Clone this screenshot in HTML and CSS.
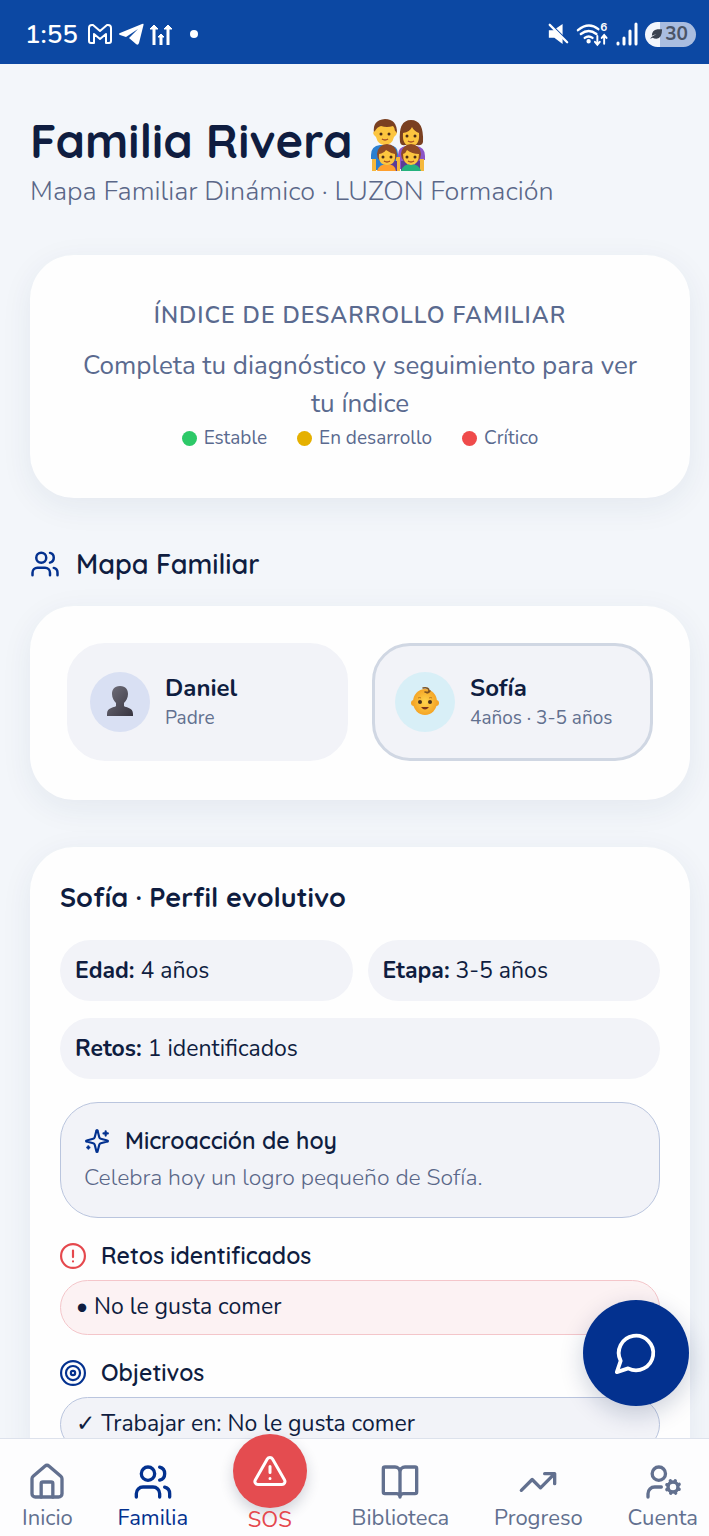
FILE: index.html
```html
<!DOCTYPE html>
<html lang="es">
  <head>
    <meta charset="utf-8">
    <meta name="viewport" content="width=device-width, initial-scale=1">
    <title>Familia Rivera</title>
    <link rel="stylesheet" href="styles.css">
  </head>
  <body>
    <!-- shared icons -->
    <svg class="sprite" aria-hidden="true">
      <symbol id="users" viewBox="0 0 24 24">
        <path d="M16 21v-2a4 4 0 0 0-4-4H6a4 4 0 0 0-4 4v2"/>
        <circle cx="9" cy="7" r="4"/>
        <path d="M22 21v-2a4 4 0 0 0-3-3.87M16 3.13a4 4 0 0 1 0 7.75"/>
      </symbol>
    </svg>

    <div class="app">
      <div class="status">
        <div class="status__group">
          <span class="status__time">1:55</span>
          <svg width="26" height="24" viewBox="0 0 26 24" fill="none" stroke="#fff" stroke-width="2" stroke-linejoin="round">
            <path d="M2 6q0-3 3-3h1l7 6 7-6h1q3 0 3 3v13q0 2-2 2h-3v-9l-6 5-6-5v9H4q-2 0-2-2z"/>
          </svg>
          <svg width="26" height="24" viewBox="0 0 26 24" fill="#fff">
            <path d="M2 11 24 2q2-1 1.500 1L21 21q-1 3-3 1l-7-6 9-9L8 15l-6-2q-2-1 0-2z"/>
          </svg>
          <svg width="24" height="24" viewBox="0 0 24 24" fill="none" stroke="#fff" stroke-width="3">
            <path d="M5 23V4M19 23V4M12 23V13"/>
            <path d="M1 7l4-4 4 4zM15 7l4-4 4 4zM9 15l3-3 3 3z" stroke-width="1" fill="#fff"/>
          </svg>
          <span class="status__dot"></span>
        </div>
        <div class="status__group status__group--right">
          <svg width="22" height="24" viewBox="0 0 24 24">
            <path fill="#fff" d="M2 8h5l10-7v22l-9-7H2z"/>
            <path d="M2 0 24 22" stroke="#0c48a3" stroke-width="3"/>
            <path d="M3 2 22 21" stroke="#fff" stroke-width="2.500" stroke-linecap="round"/>
          </svg>
          <svg class="status__wifi" width="33" height="26" viewBox="0 0 34 26">
            <path d="M2 9q11-9 21-1M5 13q8-6 16 0M9 17q4-3 8 0"/>
            <circle cx="13" cy="20.500" r="1" fill="#fff"/>
            <path d="M22 15v8M19.500 21l2.500 3 2.500-3M29 23v-8M26.500 17l2.500-3 2.500 3" stroke-width="2"/>
            <text class="status__wifi-gen" x="25" y="10">6</text>
          </svg>
          <svg width="22" height="24" viewBox="0 0 22 24" stroke="#fff" stroke-width="3" stroke-linecap="round">
            <path d="M2 21v1M8 16v6M14 9v13M20 2v20"/>
          </svg>
          <span class="battery">
            <svg width="13" height="12" viewBox="0 0 14 12"><path fill="#3b4350" d="M2 8Q2 2 8 1h5q0 10-6 10-3 0-4-1l-3 1 2-2 5-3z"/></svg>
            30
          </span>
        </div>
      </div>

      <main class="page">
        <header>
          <h1 class="page__title">Familia Rivera
            <svg class="page__emoji" viewBox="0 0 54 52" role="img" aria-label="Familia">
              <!-- father and mother -->
              <path fill="#2b7fd0" d="M0 40V36q0-9 9-10h10q8 1 8 9v16H4V40z"/>
              <path fill="#8c55c7" d="M27 50V36q0-8 8-9h10q9 1 9 10v4h-4v9z"/>
              <path fill="#f5b83c" d="M1 40h4v12H1zM49 40h4v12h-4zM25 38h4v14h-4z"/>
              <path fill="#7a4021" d="M29 23Q27 1 40 1t12 22q-1 4-6 3H34q-4 1-5-3z"/>
              <path fill="#7a4021" d="M3 14Q1 1 14 0q12 0 12 14z"/>
              <path fill="#fcc53f" d="M4 12q2-4 6-5 6 2 12 0 2 2 2 5 3 1 1 4l-2 2q-2 8-9 8T5 18l-2-2q-2-3 1-4zM32 14q7-1 9-6 2 4 7 6 1 13-8 13t-8-13z"/>
              <g fill="#4a2b16"><circle cx="10" cy="15" r="1.500"/><circle cx="18" cy="15" r="1.500"/><circle cx="36" cy="17" r="1.500"/><circle cx="44" cy="17" r="1.500"/></g>
              <path d="M11 20q3 2 6 0M37 22q3 2 6 0" fill="none" stroke="#a34b24" stroke-width="1.500"/>
              <!-- children -->
              <path fill="#5b3c98" d="M19 42h7v10h-7zM30 42h6v10h-6zM44 42h5v10h-5z"/>
              <path fill="#ffa02e" d="M6 52q2-7 10-7t9 7z"/>
              <path fill="#24b27d" d="M30 52q2-7 10-7t10 7z"/>
              <circle cx="16" cy="35" r="10" fill="#8f4a25"/>
              <circle cx="40" cy="35" r="10" fill="#8f4a25"/>
              <path fill="#fcc53f" d="M8 35q5-1 7-4 4 3 9 4 1 11-8 11T8 35zM32 35q3-1 4-4 5 4 12 4 0 11-8 11t-8-11z"/>
              <g fill="#4a2b16"><circle cx="12" cy="38" r="1.500"/><circle cx="20" cy="38" r="1.500"/><circle cx="36" cy="38" r="1.500"/><circle cx="44" cy="38" r="1.500"/></g>
              <path d="M13 42q3 2 6 0M37 42q3 2 6 0" fill="none" stroke="#a34b24" stroke-width="1.500"/>
            </svg>
          </h1>
          <p class="page__subtitle">Mapa Familiar Dinámico · LUZON Formación</p>
        </header>

        <section class="card index">
          <h2 class="index__title">Índice de desarrollo familiar</h2>
          <p class="index__text">Completa tu diagnóstico y seguimiento para ver tu índice</p>
          <ul class="legend">
            <li class="legend__item legend__item--ok">Estable</li>
            <li class="legend__item legend__item--progress">En desarrollo</li>
            <li class="legend__item legend__item--critical">Crítico</li>
          </ul>
        </section>

        <h2 class="section-title">
          <svg class="icon icon--blue" width="30" height="30"><use href="#users"/></svg>
          Mapa Familiar
        </h2>
        <section class="card members">
          <button class="member" type="button">
            <span class="member__avatar">
              <svg width="28" height="32" viewBox="0 0 28 32">
                <defs>
                  <linearGradient id="bust" x1="0" y1="0" x2="1" y2="1"><stop offset="0" stop-color="#72717c"/><stop offset="1" stop-color="#37343f"/></linearGradient>
                </defs>
                <path fill="url(#bust)" d="M14 0c6 0 8 4 8 8s-2 7-4 9v3c2 2 9 1 9 8v2H1v-2c0-7 7-6 9-8v-3c-2-2-4-5-4-9s2-8 8-8z"/>
              </svg>
            </span>
            <span class="member__info">
              <strong class="member__name">Daniel</strong>
              <span class="member__role">Padre</span>
            </span>
          </button>
          <button class="member member--active" type="button">
            <span class="member__avatar member__avatar--child">
              <svg width="30" height="30" viewBox="0 0 30 30">
                <defs>
                  <radialGradient id="face"><stop offset="0" stop-color="#ffd54c"/><stop offset="1" stop-color="#f5a526"/></radialGradient>
                </defs>
                <circle cx="4" cy="16" r="3" fill="#f5a526"/>
                <circle cx="26" cy="16" r="3" fill="#f5a526"/>
                <ellipse cx="15" cy="15" rx="12" ry="13" fill="url(#face)"/>
                <path d="M13 1q6-1 6 3 0 2-4 1M17 6q2 0 3-2" fill="none" stroke="#7d5120" stroke-width="1.500" stroke-linecap="round"/>
                <circle cx="10" cy="15" r="2" fill="#4a321c"/>
                <circle cx="20" cy="15" r="2" fill="#4a321c"/>
                <path d="M11 20q4 5 8 0z" fill="#7a351a"/>
                <path d="M8 11q2-1 3 0M19 11q2-1 3 0" stroke="#b97820" fill="none"/>
              </svg>
            </span>
            <span class="member__info">
              <strong class="member__name">Sofía</strong>
              <span class="member__role">4años · 3-5 años</span>
            </span>
          </button>
        </section>

        <section class="card profile">
          <h2 class="profile__title">Sofía · Perfil evolutivo</h2>
          <div class="facts">
            <p class="fact"><b>Edad:</b> 4 años</p>
            <p class="fact"><b>Etapa:</b> 3-5 años</p>
            <p class="fact fact--wide"><b>Retos:</b> 1 identificados</p>
          </div>

          <div class="micro">
            <h3 class="micro__title">
              <svg class="icon icon--blue" width="26" height="26" viewBox="0 0 24 24">
                <path d="M9.900 15.500A2 2 0 0 0 8.500 14.100L2.400 12.500a.5.500 0 0 1 0-1L8.500 9.900A2 2 0 0 0 9.900 8.500L11.500 2.400a.5.500 0 0 1 1 0L14.100 8.500A2 2 0 0 0 15.500 9.900L21.600 11.500a.5.500 0 0 1 0 1L15.500 14.100a2 2 0 0 0-1.400 1.400L12.500 21.600a.5.500 0 0 1-1 0z"/>
                <path d="M20 3v4M22 5h-4M4 17v2M5 18H3"/>
              </svg>
              Microacción de hoy
            </h3>
            <p class="micro__text">Celebra hoy un logro pequeño de Sofía.</p>
          </div>

          <h3 class="list-title">
            <svg class="icon icon--red" width="26" height="26" viewBox="0 0 24 24">
              <circle cx="12" cy="12" r="11"/>
              <path d="M12 7v6M12 17h.01"/>
            </svg>
            Retos identificados
          </h3>
          <p class="entry entry--red">• No le gusta comer</p>

          <h3 class="list-title">
            <svg class="icon icon--blue" width="26" height="26" viewBox="0 0 24 24">
              <circle cx="12" cy="12" r="11"/>
              <circle cx="12" cy="12" r="6.500"/>
              <circle cx="12" cy="12" r="2"/>
            </svg>
            Objetivos
          </h3>
          <p class="entry">✓ Trabajar en: No le gusta comer</p>
        </section>
      </main>

      <button class="chat" type="button" aria-label="Abrir chat">
        <svg class="icon" width="46" height="46" viewBox="0 0 24 24"><path d="M7.900 20A9 9 0 1 0 4 16.100L2 22Z"/></svg>
      </button>

      <nav class="nav">
        <a class="nav__item" href="#inicio">
          <svg class="icon" width="40" height="40" viewBox="0 0 24 24">
            <path d="M3 10a2 2 0 0 1 .7-1.500l7-6a2 2 0 0 1 2.600 0l7 6A2 2 0 0 1 21 10v9a2 2 0 0 1-2 2H5a2 2 0 0 1-2-2z"/>
            <path d="M15.500 21v-8a1 1 0 0 0-1-1h-5a1 1 0 0 0-1 1v8"/>
          </svg>
          Inicio
        </a>
        <a class="nav__item nav__item--active" href="#familia">
          <svg class="icon" width="40" height="40"><use href="#users"/></svg>
          Familia
        </a>
        <a class="nav__item nav__item--sos" href="#sos">
          <span class="nav__sos">
            <svg class="icon" width="36" height="36" viewBox="0 0 24 24">
              <path d="m21.700 18-8-14a2 2 0 0 0-3.500 0l-8 14A2 2 0 0 0 4 21h16a2 2 0 0 0 1.700-3M12 9v4M12 17h.01"/>
            </svg>
          </span>
          SOS
        </a>
        <a class="nav__item" href="#biblioteca">
          <svg class="icon" width="40" height="40" viewBox="0 0 24 24">
            <path d="M12 6v15M3 19a1 1 0 0 1-1-1V4a1 1 0 0 1 1-1h6a3 3 0 0 1 3 3 3 3 0 0 1 3-3h6a1 1 0 0 1 1 1v14a1 1 0 0 1-1 1h-7a2 2 0 0 0-2 2 2 2 0 0 0-2-2z"/>
          </svg>
          Biblioteca
        </a>
        <a class="nav__item" href="#progreso">
          <svg class="icon" width="40" height="40" viewBox="0 0 24 24">
            <path d="M22 7 13.500 15.500 8.500 10.500 2 17M16 7h6v6"/>
          </svg>
          Progreso
        </a>
        <a class="nav__item" href="#cuenta">
          <svg class="icon" width="40" height="40" viewBox="0 0 24 24">
            <circle cx="9.500" cy="7" r="4"/>
            <path d="M11 15H7a4 4 0 0 0-4 4v2"/>
            <circle cx="18" cy="15" r="3"/>
            <path d="m21.700 16.400-.9-.3M15.200 13.900l-.9-.3M16.600 18.700l.3-.9M19.100 12.200l.3-.9M19.600 18.700l-.4-1M16.800 12.300l-.4-1M14.300 16.600l1-.4M20.700 13.800l1-.4"/>
          </svg>
          Cuenta
        </a>
      </nav>
    </div>
  </body>
</html>
```
FILE: styles.css
```css
* {
  box-sizing: border-box;
}

body {
  margin: 0;
  font-family: Nunito, Lato, "DejaVu Sans", sans-serif;
  font-size: 23px;
  color: #0f1d40;
  background: #f3f6fa;
}

h1, h2, h3, p, ul {
  margin: 0;
  padding: 0;
}

h1, h2, h3 {
  font-family: Quicksand, Lato, sans-serif;
  font-weight: 700;
}

button {
  font: inherit;
  color: inherit;
  border: none;
}

.sprite {
  position: absolute;
  width: 0;
  height: 0;
}

.icon {
  flex: none;
  fill: none;
  stroke: currentColor;
  stroke-width: 2;
  stroke-linecap: round;
  stroke-linejoin: round;
}

.icon--blue {
  color: #03318f;
}

.icon--red {
  color: #e5484d;
}

.app {
  display: flex;
  flex-direction: column;
  height: 100vh;
  position: relative;
}

/* status bar */

.status {
  flex: none;
  display: flex;
  justify-content: space-between;
  align-items: center;
  height: 64px;
  padding: 4px 13px 0 25px;
  color: #fff;
  background: #0c48a3;
}

.status__group {
  display: flex;
  align-items: center;
  gap: 5px;
}

.status__group--right {
  gap: 7px;
}

.status__time {
  font-size: 26px;
  font-weight: 600;
  margin-right: 4px;
}

.status__dot {
  width: 8px;
  height: 8px;
  margin-left: 12px;
  border-radius: 50%;
  background: #fff;
}

.status__wifi {
  overflow: visible;
  fill: none;
  stroke: #fff;
  stroke-width: 2.5;
  stroke-linecap: round;
}

.status__wifi-gen {
  font-size: 12px;
  font-weight: 700;
  fill: #fff;
  stroke: none;
}

.battery {
  display: flex;
  align-items: center;
  gap: 2px;
  height: 25px;
  padding: 0 8px 0 5px;
  border-radius: 13px;
  font-size: 19px;
  font-weight: 700;
  color: #4b5567;
  background: linear-gradient(to right, #f3f6fc 15px, #a9bde0 15px);
}

/* page */

.page {
  flex: 1;
  min-height: 0;
  overflow-y: auto;
  scrollbar-width: none;
  padding: 47px 19px 48px 30px;
}

.page__title {
  display: flex;
  align-items: flex-end;
  gap: 18px;
  font-size: 47px;
  line-height: 60px;
}

.page__emoji {
  width: 54px;
  height: 52px;
}

.page__subtitle {
  margin-top: 2px;
  font-size: 27px;
  font-weight: 300;
  line-height: 38px;
  color: #5a6788;
}

.card {
  background: #fefefe;
  border-radius: 44px;
  box-shadow: 0 8px 32px rgba(30, 50, 100, 0.07);
}

.index {
  margin-top: 44px;
  padding: 45px 40px;
  text-align: center;
  color: #5a6a8f;
}

.index__title {
  font-family: Nunito, Lato, sans-serif;
  font-size: 23px;
  font-weight: 600;
  line-height: 32px;
  letter-spacing: 1px;
  text-transform: uppercase;
}

.index__text {
  margin-top: 15px;
  font-size: 26px;
  line-height: 38px;
}

.legend {
  display: flex;
  justify-content: center;
  gap: 30px;
  font-size: 19px;
  line-height: 30px;
  list-style: none;
}

.legend__item {
  display: flex;
  align-items: center;
  gap: 7px;
}

.legend__item:before {
  content: '';
  width: 15px;
  height: 15px;
  border-radius: 50%;
}

.legend__item--ok:before {
  background: #2dc968;
}

.legend__item--progress:before {
  background: #e5b000;
}

.legend__item--critical:before {
  background: #ef4b4b;
}

.section-title {
  display: flex;
  align-items: center;
  gap: 16px;
  margin: 46px 0 22px;
  font-size: 27px;
  font-weight: 600;
  line-height: 40px;
}

.members {
  display: grid;
  grid-template-columns: 1fr 1fr;
  gap: 24px;
  padding: 37px 37px 39px;
}

.member {
  display: flex;
  align-items: center;
  gap: 15px;
  padding: 26px 20px;
  text-align: left;
  background: #f2f3f8;
  border: 3px solid #f2f3f8;
  border-radius: 38px;
}

.member--active {
  border-color: #d0d7e3;
}

.member__avatar {
  flex: none;
  display: flex;
  align-items: center;
  justify-content: center;
  width: 60px;
  height: 60px;
  border-radius: 50%;
  background: #d9e0f3;
}

.member__avatar--child {
  background: #d8eff7;
}

.member__info {
  display: flex;
  flex-direction: column;
}

.member__name {
  font-size: 24px;
  font-weight: 700;
  line-height: 32px;
}

.member__role {
  font-size: 19px;
  line-height: 28px;
  color: #62708f;
}

.profile {
  margin-top: 47px;
  padding: 30px;
}

.profile__title {
  font-size: 27px;
  line-height: 40px;
}

.facts {
  display: grid;
  grid-template-columns: 1fr 1fr;
  gap: 17px 15px;
  margin: 23px 0;
}

.fact {
  padding: 14px 15px;
  line-height: 33px;
  background: #f2f3f8;
  border-radius: 31px;
}

.fact--wide {
  grid-column: 1 / 3;
}

.micro {
  padding: 20px 23px;
  background: #f2f3f8;
  border: 1px solid #bac5de;
  border-radius: 38px;
}

.micro__title {
  display: flex;
  align-items: center;
  gap: 15px;
  font-size: 23px;
  font-weight: 600;
  line-height: 36px;
}

.micro__text {
  font-weight: 300;
  line-height: 38px;
  color: #5a6788;
}

.list-title {
  display: flex;
  align-items: center;
  gap: 15px;
  margin: 22px 0 8px;
  font-size: 23px;
  font-weight: 600;
  line-height: 32px;
}

.entry {
  padding: 9px 15px 11px;
  line-height: 33px;
  background: #f2f3f8;
  border: 1px solid #bac5de;
  border-radius: 28px;
}

.entry--red {
  background: #fcf2f3;
  border-color: #f4c6ca;
}

/* floating chat button */

.chat {
  position: absolute;
  right: 20px;
  bottom: 130px;
  display: flex;
  align-items: center;
  justify-content: center;
  width: 106px;
  height: 106px;
  border-radius: 50%;
  color: #fff;
  background: #03318f;
  box-shadow: 0 8px 24px rgba(10, 30, 80, 0.2);
}

/* bottom navigation */

.nav {
  flex: none;
  display: flex;
  justify-content: space-between;
  height: 98px;
  padding: 23px 11px 0 22px;
  font-size: 22px;
  background: #fdfdfe;
  border-top: 1px solid #dde2ec;
}

.nav__item {
  display: flex;
  flex-direction: column;
  align-items: center;
  line-height: 32px;
  color: #62708f;
  text-decoration: none;
}

.nav__item--active {
  color: #03318f;
}

.nav__item--sos {
  color: #e5484d;
}

.nav__sos {
  display: flex;
  align-items: center;
  justify-content: center;
  width: 74px;
  height: 74px;
  margin-top: -28px;
  margin-bottom: -4px;
  border-radius: 50%;
  color: #fff;
  background: #e44c50;
  box-shadow: 0 6px 14px rgba(30, 40, 70, 0.2);
}
```
